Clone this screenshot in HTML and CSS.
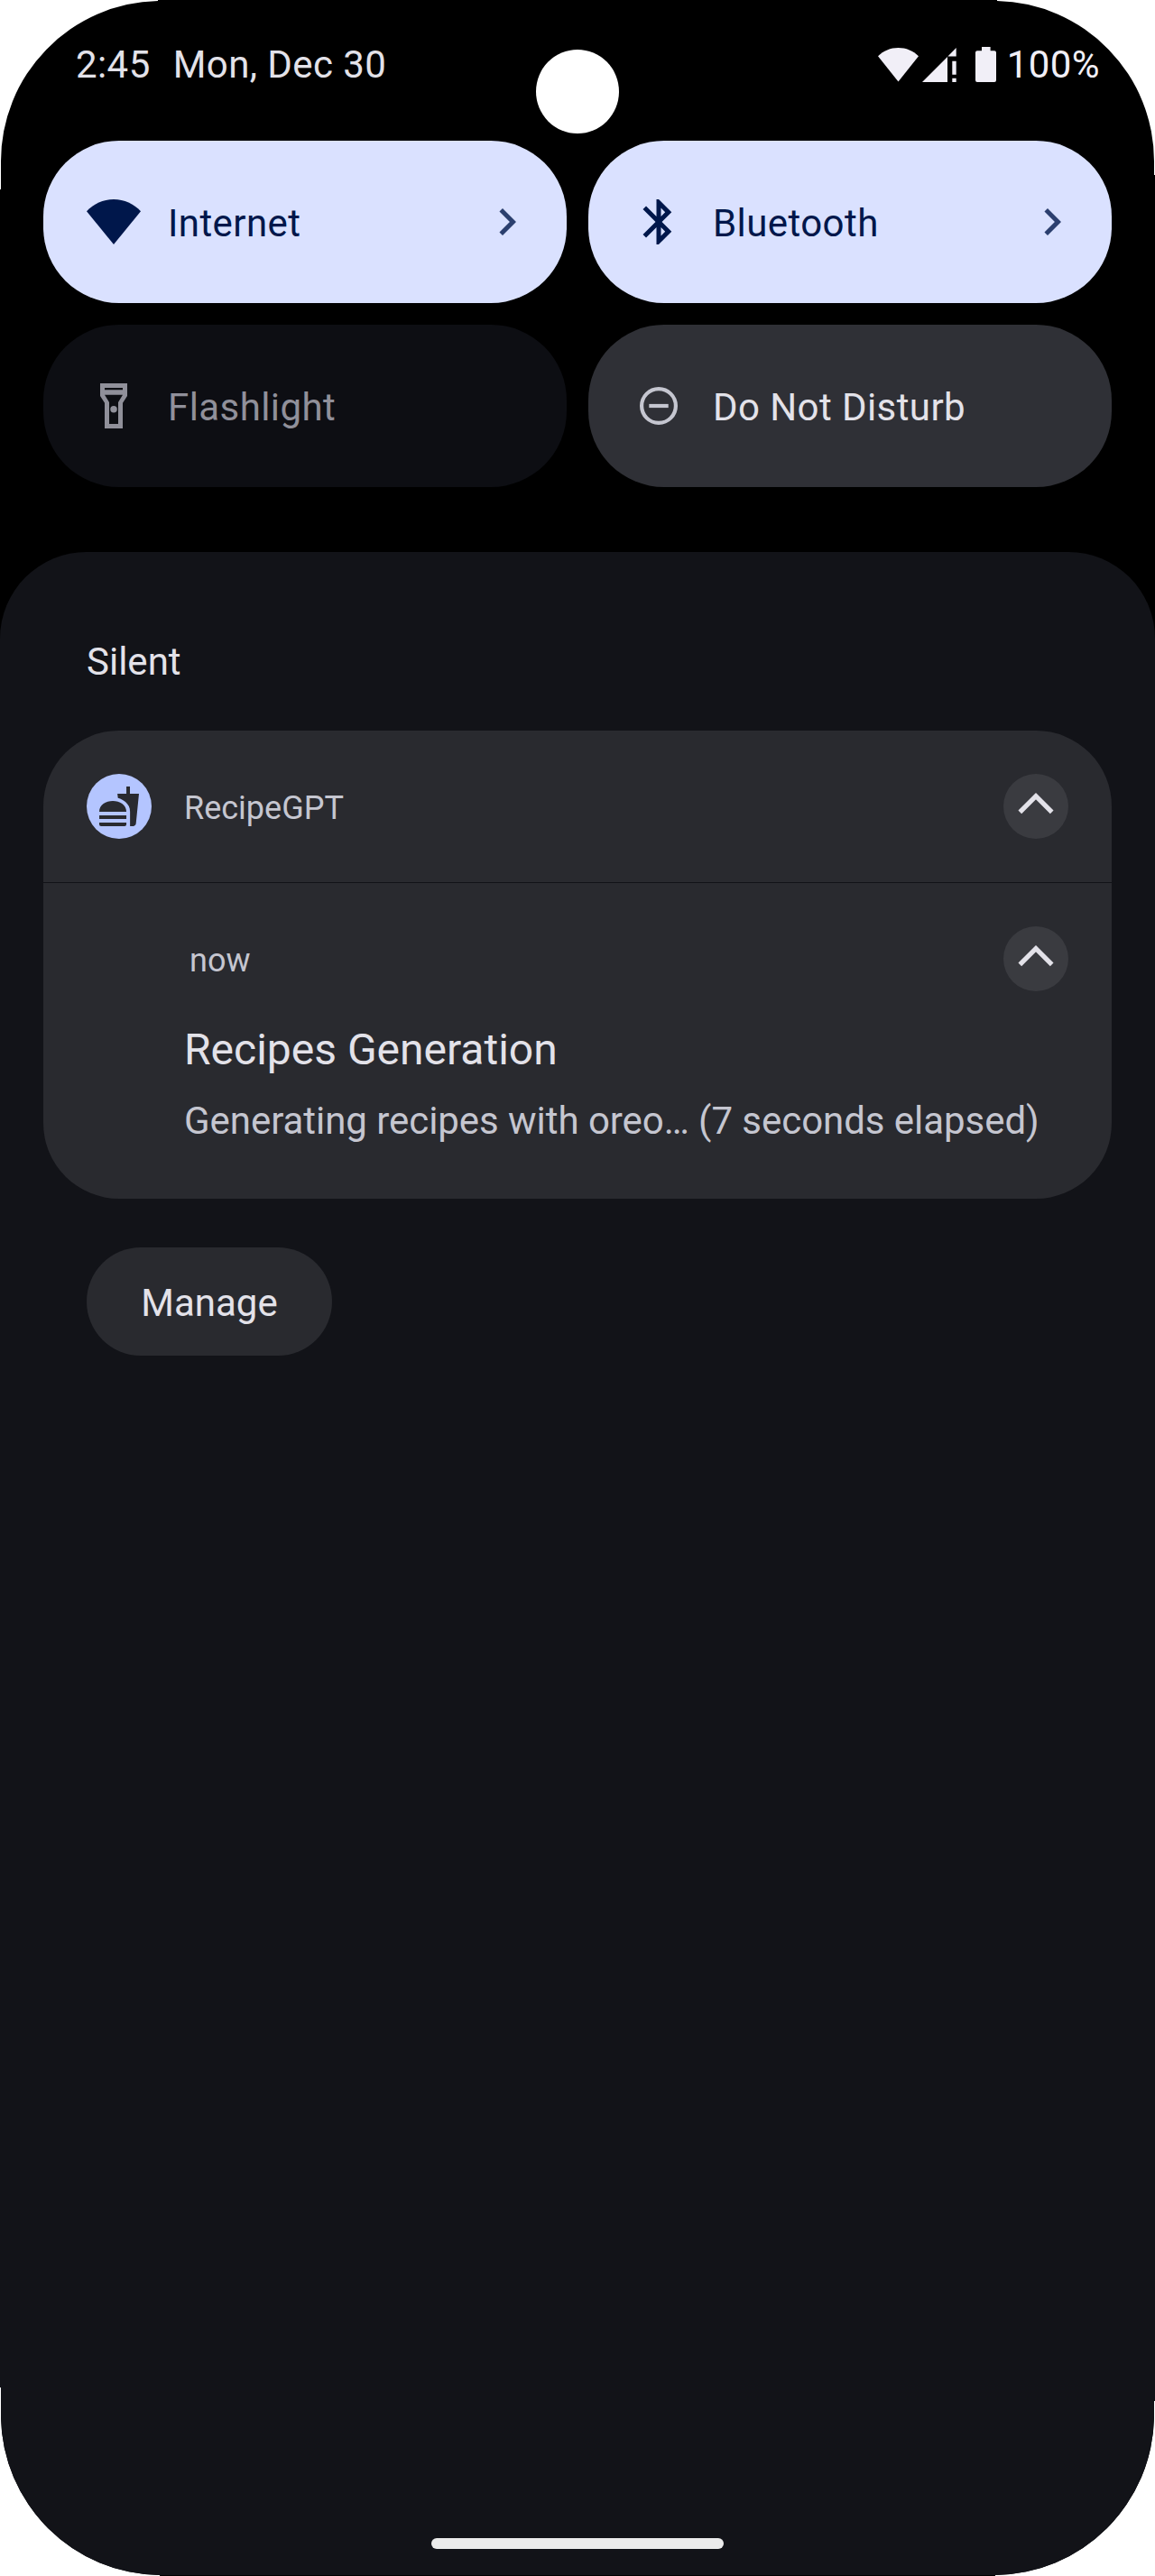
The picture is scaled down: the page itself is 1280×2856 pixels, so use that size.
FILE: index.html
```html
<!DOCTYPE html>
<html lang="en">
<head>
<meta charset="utf-8">
<title>Notification shade</title>
<link rel="stylesheet" href="styles.css">
</head>
<body>
<main class="screen">
  <header class="status">
    <span class="clock">2:45</span>
    <span class="date">Mon, Dec 30</span>
    <div class="system">
      <svg class="s-wifi" width="45" height="40" viewBox="0 0 45 40"><path d="M22.5 38.5 0 10.3C6 4.3 13.8 1 22.5 1S39 4.3 45 10.3z"/></svg>
      <svg class="s-cell" width="38" height="40" viewBox="0 0 38 40"><path d="M37.7 1v9.5H28.4zM0 39 28 11v28zM33.3 15.7h4.4v15h-4.4zM33.3 34.7h4.4V39h-4.4z"/></svg>
      <svg class="s-battery" width="23" height="40" viewBox="0 0 23 40"><path d="M7 0h9.6v4.3H21a2 2 0 0 1 2 2V37a2 2 0 0 1-2 2H2a2 2 0 0 1-2-2V6.3a2 2 0 0 1 2-2h5z"/></svg>
      <span class="percent">100%</span>
    </div>
  </header>
  <div class="camera"></div>

  <section class="tiles">
    <div class="tile on">
      <svg class="icon" viewBox="0 0 24 24"><path d="M12 22 0 7.3C3.1 4 7.3 2 12 2s8.900 2 12 5.300z"/></svg>
      <span class="label">Internet</span>
      <svg class="icon more" viewBox="0 0 24 24"><path d="M10 6 8.590 7.410 13.170 12l-4.580 4.590L10 18l6-6z"/></svg>
    </div>
    <div class="tile on">
      <svg class="icon" viewBox="0 0 24 24"><path d="M17.710 7.710 12 2h-1v7.590L6.410 5 5 6.410 10.590 12 5 17.590 6.410 19 11 14.410V22h1l5.710-5.710-4.300-4.290zM13 5.830l1.880 1.880L13 9.590zm1.880 10.460L13 18.170v-3.760z"/></svg>
      <span class="label">Bluetooth</span>
      <svg class="icon more" viewBox="0 0 24 24"><path d="M10 6 8.590 7.410 13.170 12l-4.580 4.590L10 18l6-6z"/></svg>
    </div>
    <div class="tile unavailable">
      <svg class="icon" viewBox="0 0 24 24"><path fill-rule="evenodd" d="M18 2H6v5.600l2 3.100V22h8V10.700l2-3.100zM16 4v.9H8V4zM14 10.400V20h-4v-9.600L8 7.100h8z"/><circle cx="12" cy="13.500" r="1.500"/></svg>
      <span class="label">Flashlight</span>
    </div>
    <div class="tile off">
      <svg class="icon" viewBox="0 0 60 60"><circle class="ring" cx="30" cy="30" r="18.900"/><path d="M19.300 27.900h21.400v4.200H19.300z"/></svg>
      <span class="label">Do Not Disturb</span>
    </div>
  </section>

  <section class="shade">
    <h2 class="heading">Silent</h2>
    <article class="card">
      <div class="row">
        <div class="badge"><svg width="48" height="48" viewBox="0 0 24 24"><path d="M18.060 22.990h1.660c.84 0 1.530-.64 1.630-1.460L23 5.050h-5V1h-1.970v4.050h-4.970l.3 2.340c1.710.47 3.310 1.320 4.270 2.260 1.440 1.420 2.430 2.890 2.430 5.290zM1 21.990V21h15.030v.99c0 .55-.45 1-1.010 1H2.010c-.56 0-1.010-.45-1.010-1zm15.030-7c0-8-15.030-8-15.030 0zM1.020 17h15v2h-15z"/></svg></div>
        <span class="app">RecipeGPT</span>
        <svg class="fold" viewBox="0 0 72 72"><path d="M18.300 42.400 36 24.700l17.700 17.700"/></svg>
      </div>
      <div class="message">
        <div class="meta">
          <span class="time">now</span>
          <svg class="fold" viewBox="0 0 72 72"><path d="M18.300 42.400 36 24.700l17.700 17.700"/></svg>
        </div>
        <h3 class="title">Recipes Generation</h3>
        <p class="body">Generating recipes with oreo… (7 seconds elapsed)</p>
      </div>
    </article>
    <button class="manage" type="button">Manage</button>
    <div class="home"></div>
  </section>
</main>
</body>
</html>
```

FILE: styles.css
```css
* { box-sizing: border-box; }

body {
  margin: 0;
  background: #fff;
  font-family: Roboto, "Liberation Sans", sans-serif;
  font-size: 42px;
  line-height: 50px;
}

.screen {
  position: relative;
  display: flex;
  flex-direction: column;
  width: 1280px;
  height: 2856px;
  background: #000;
  clip-path: path("M0 210H1V180A178 178 0 0 1 175 1V0H1105V1A178 178 0 0 1 1279 180V194H1280V2662H1279V2680A178 178 0 0 1 1103 2855V2856H177V2855A178 178 0 0 1 1 2680V2647H0Z");
}

.status {
  display: flex;
  align-items: flex-start;
  height: 156px;
  padding: 47px 61px 0 84px;
  color: #e3e2e9;
  letter-spacing: .01em;
  white-space: nowrap;
}

.date { margin-left: 25px; }

.system {
  display: flex;
  margin-left: auto;
  color: #f1eff7;
  fill: #f1eff7;
}

.system svg { margin-top: 5px; }
.s-cell { margin-left: 4px; }
.s-battery { margin-left: 21px; }
.percent { margin-left: 12px; }

.camera {
  position: absolute;
  left: 594px;
  top: 55px;
  width: 92px;
  height: 93px;
  border-radius: 50%;
  background: #fff;
}

.tiles {
  display: grid;
  grid-template-columns: 1fr 1fr;
  grid-auto-rows: 180px;
  gap: 24px;
  padding: 0 48px;
}

.tile {
  display: flex;
  align-items: center;
  padding: 0 36px 0 48px;
  border-radius: 84px;
  fill: currentColor;
}

.on { background: #dae1ff; color: #00174b; }
.unavailable { background: #0d0e13; color: #90909a; }
.off { background: #2f3036; color: #e3e2e9; }
.off .icon { color: #c5c6d0; fill: currentColor; }

.icon { width: 60px; height: 60px; }
.ring { fill: none; stroke: currentColor; stroke-width: 4.2; }
.label { margin-left: 30px; padding-top: 4px; letter-spacing: .01em; }
.more { margin-left: auto; opacity: .8; }

.shade {
  display: flex;
  flex: 1;
  flex-direction: column;
  align-items: flex-start;
  margin-top: 72px;
  padding: 97px 48px 29px;
  border-bottom: 1px solid #000;
  border-radius: 96px 96px 0 0;
  background: #121318;
  color: #e3e2e9;
}

.heading {
  margin: 0 0 51px 48px;
  font-size: 42px;
  font-weight: 400;
}

.card {
  align-self: stretch;
  height: 519px;
  border-radius: 84px;
  background: #292a2f;
}

.row {
  display: flex;
  align-items: center;
  height: 169px;
  padding: 0 48px;
  border-bottom: 1px solid #121318;
}

.badge {
  display: grid;
  place-items: center;
  width: 72px;
  height: 72px;
  border-radius: 50%;
  background: #b4c5ff;
  fill: #292a2f;
}

.app, .time { padding-top: 4px; color: #c5c6d0; font-size: 36px; }
.app { margin-left: 36px; }

.fold {
  width: 72px;
  height: 72px;
  margin-left: auto;
  border-radius: 50%;
  background: #3a3b40;
  fill: none;
  stroke: #e3e2e9;
  stroke-width: 5.2;
}

.message { padding: 48px 48px 0 156px; }
.meta { display: flex; align-items: center; padding-left: 6px; }

.title {
  margin: 35px 0 0;
  font-size: 48px;
  font-weight: 400;
  line-height: 60px;
}

.body {
  margin: 24px 0 0;
  color: #c5c6d0;
  letter-spacing: -.05px;
  white-space: nowrap;
}

.manage {
  width: 272px;
  height: 120px;
  margin: 54px 0 0 48px;
  padding: 4px 0 0;
  border: 0;
  border-radius: 60px;
  background: #292a2f;
  color: inherit;
  font: inherit;
}

.home {
  align-self: center;
  width: 324px;
  height: 12px;
  margin-top: auto;
  border-radius: 6px;
  background: #ebebeb;
}
```
